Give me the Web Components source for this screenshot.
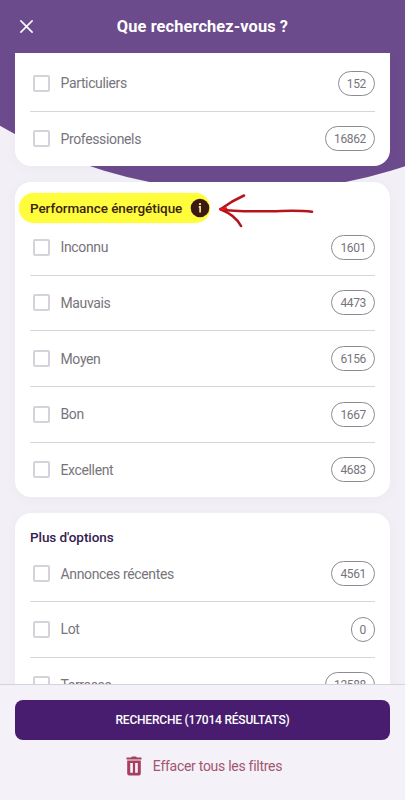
<!DOCTYPE html>
<html lang="fr">
<head>
<meta charset="utf-8">
<title>Que recherchez-vous ?</title>
<style>
  html, body {
    margin: 0;
    height: 100%;
    overflow: hidden;
  }
  body {
    font-family: Roboto, "Liberation Sans", sans-serif;
    background: #f2f0f6;
  }
</style>
</head>
<body>
<search-page>
  <page-header slot="header">Que recherchez-vous ?</page-header>
  <filter-card continued>
    <filter-option count="152">Particuliers</filter-option>
    <filter-option count="16862">Professionels</filter-option>
  </filter-card>
  <filter-card>
    <card-heading slot="heading" info>Performance énergétique</card-heading>
    <filter-option count="1601">Inconnu</filter-option>
    <filter-option count="4473">Mauvais</filter-option>
    <filter-option count="6156">Moyen</filter-option>
    <filter-option count="1667">Bon</filter-option>
    <filter-option count="4683">Excellent</filter-option>
  </filter-card>
  <filter-card>
    <card-heading slot="heading">Plus d'options</card-heading>
    <filter-option count="4561">Annonces récentes</filter-option>
    <filter-option count="0">Lot</filter-option>
    <filter-option count="12588">Terrasse</filter-option>
  </filter-card>
  <search-footer slot="footer" results="17014"></search-footer>
</search-page>

<script>
(function () {
  function attach(host, html) {
    let template = document.createElement("template");
    template.innerHTML = html;
    let root = host.attachShadow({ mode: "open" });
    root.appendChild(template.content.cloneNode(true));
    return root;
  }

  class SearchPage extends HTMLElement {
    constructor() {
      super();
      attach(this, `
        <style>
          :host {
            display: flex;
            flex-direction: column;
            position: relative;
            height: 800px;
            overflow: hidden;
          }
          .backdrop {
            position: absolute;
            top: 0;
            left: 0;
            z-index: -1;
          }
          main {
            flex: 1;
            min-height: 0;
            overflow: hidden;
            display: flex;
            flex-direction: column;
            gap: 16px;
            padding: 0 15px;
          }
        </style>
        <svg class="backdrop" width="405" height="200">
          <circle cx="247.5" cy="-304.5" r="496.4" fill="#6c4b8d"/>
        </svg>
        <slot name="header"></slot>
        <main><slot></slot></main>
        <slot name="footer"></slot>
      `);
    }
  }

  class PageHeader extends HTMLElement {
    constructor() {
      super();
      attach(this, `
        <style>
          :host {
            display: grid;
            grid-template-columns: 53px 1fr 53px;
            align-items: center;
            height: 53px;
            flex: none;
            color: #fff;
          }
          svg { margin-left: 20px; }
          h1 {
            margin: 0;
            text-align: center;
            font-size: 16.4px;
            line-height: 20px;
            font-weight: 700;
            letter-spacing: 0.1px;
            white-space: nowrap;
          }
        </style>
        <svg width="13" height="13" viewBox="0 0 13 13" fill="none" stroke="#fff" stroke-width="1.6" stroke-linecap="round">
          <path d="M0.9 0.9L12.1 12.1M12.1 0.9L0.9 12.1"/>
        </svg>
        <h1><slot></slot></h1>
      `);
    }
  }

  class FilterCard extends HTMLElement {
    constructor() {
      super();
      attach(this, `
        <style>
          :host {
            display: block;
            flex: none;
            box-sizing: border-box;
            padding: 0 15px;
            border-radius: 16px;
            background: #fff;
            box-shadow: 0 2px 12px rgba(70, 40, 120, 0.04);
          }
          :host([continued]) {
            padding-top: 3px;
            border-radius: 0 0 16px 16px;
          }
          ::slotted(filter-option:last-of-type) {
            --divider: transparent;
            height: 54.5px;
          }
        </style>
        <slot name="heading"></slot>
        <slot></slot>
      `);
    }
  }

  class CardHeading extends HTMLElement {
    constructor() {
      super();
      let info = this.hasAttribute("info");
      attach(this, `
        <style>
          :host {
            display: flex;
            align-items: center;
            height: 33px;
            color: #35204f;
          }
          :host([info]) {
            height: 37.5px;
            color: #3b2410;
          }
          .label {
            display: flex;
            align-items: center;
            padding-top: 15px;
            height: 18px;
          }
          :host([info]) .label {
            box-sizing: border-box;
            height: 30px;
            margin: 14px 0 0 -11px;
            padding: 0 0 0 11px;
            border-radius: 15px;
            background: #fffd3b;
            box-shadow: 0 0 1px #fffd3b;
          }
          h2 {
            margin: 0;
            font-size: 13.5px;
            line-height: 18px;
            font-weight: 500;
            letter-spacing: -0.07px;
            white-space: nowrap;
          }
          :host([info]) h2 { width: 152px; }
          .icon { margin-left: 8px; }
          .arrow { margin: 15px 0 0 8px; }
        </style>
        <div class="label">
          <h2><slot></slot></h2>
          ${info ? `
          <svg class="icon" width="20" height="20" viewBox="0 0 20 20">
            <circle cx="10" cy="10" r="9.3" fill="#3b1a14"/>
            <circle cx="10" cy="6.1" r="1.1" fill="#fdf0a0"/>
            <path d="M8.8 8.9H10.1V14.4" fill="none" stroke="#fdf0a0" stroke-width="1.6"/>
          </svg>` : ""}
        </div>
        ${info ? `
        <svg class="arrow" width="98" height="38" viewBox="0 0 98 38" fill="none" stroke="#b5161d" stroke-width="2.6" stroke-linecap="round" stroke-linejoin="round">
          <path d="M26 5.5C18 9 11 13 2.5 19.2C16 22 34 21.2 54 21.2C68 21 80 20 94 21.8"/>
          <path d="M2.5 19.2C12 23 19 28 23 36"/>
          <path d="M2.5 19.2L8 18.5" stroke="#e8101a"/>
        </svg>` : ""}
      `);
    }
  }

  class FilterOption extends HTMLElement {
    constructor() {
      super();
      let root = attach(this, `
        <style>
          :host {
            display: flex;
            align-items: center;
            box-sizing: border-box;
            height: 55.75px;
            padding-left: 3px;
            border-bottom: 1px solid var(--divider, #d7d5da);
            color: #77747b;
          }
          .box {
            box-sizing: border-box;
            width: 17px;
            height: 17px;
            border: 2px solid #d5d2d9;
            border-radius: 2px;
          }
          .name {
            flex: 1;
            margin-left: 10.5px;
            font-size: 14px;
            line-height: 18px;
            letter-spacing: -0.36px;
          }
          .count {
            box-sizing: border-box;
            min-width: 24px;
            height: 25px;
            padding: 0 8px;
            border: 1px solid #8d8a92;
            border-radius: 13px;
            font-size: 12px;
            line-height: 24px;
            letter-spacing: -0.35px;
            text-align: center;
          }
        </style>
        <span class="box"></span>
        <span class="name"><slot></slot></span>
        <span class="count"></span>
      `);
      root.querySelector(".count").textContent = this.getAttribute("count");
    }
  }

  class SearchFooter extends HTMLElement {
    constructor() {
      super();
      let root = attach(this, `
        <style>
          :host {
            display: flex;
            flex-direction: column;
            align-items: center;
            flex: none;
            box-sizing: border-box;
            height: 116px;
            padding: 15px 15px 0;
            border-top: 1px solid #d6d3da;
            background: #f4f1f8;
          }
          button {
            border: 0;
            padding: 0;
            background: none;
            font-family: inherit;
          }
          .search {
            width: 100%;
            height: 40px;
            border-radius: 8px;
            background: #481d6f;
            color: #fff;
            font-size: 12px;
            font-weight: 500;
            letter-spacing: -0.2px;
          }
          .clear {
            display: flex;
            align-items: center;
            gap: 11px;
            margin: 16px 0 0 3px;
            color: #a2566f;
            font-size: 14px;
            line-height: 20px;
            letter-spacing: -0.28px;
          }
        </style>
        <button class="search"></button>
        <button class="clear">
          <svg width="16" height="20" viewBox="0 0 16 20" fill="#a83f5f">
            <path d="M0.5 1.6H5L6 0.4H10L11 1.6H15.5V3.4H0.5Z"/>
            <path fill-rule="evenodd" d="M1.2 4.6H14.8V17.4Q14.8 19.4 12.8 19.4H3.2Q1.2 19.4 1.2 17.4ZM4.2 7V16.8H6.9V7ZM9.1 7V16.8H11.8V7Z"/>
          </svg>
          <span>Effacer tous les filtres</span>
        </button>
      `);
      root.querySelector(".search").textContent =
        "RECHERCHE (" + this.getAttribute("results") + " RÉSULTATS)";
    }
  }

  customElements.define("search-page", SearchPage);
  customElements.define("page-header", PageHeader);
  customElements.define("filter-card", FilterCard);
  customElements.define("card-heading", CardHeading);
  customElements.define("filter-option", FilterOption);
  customElements.define("search-footer", SearchFooter);
})();
</script>
</body>
</html>
